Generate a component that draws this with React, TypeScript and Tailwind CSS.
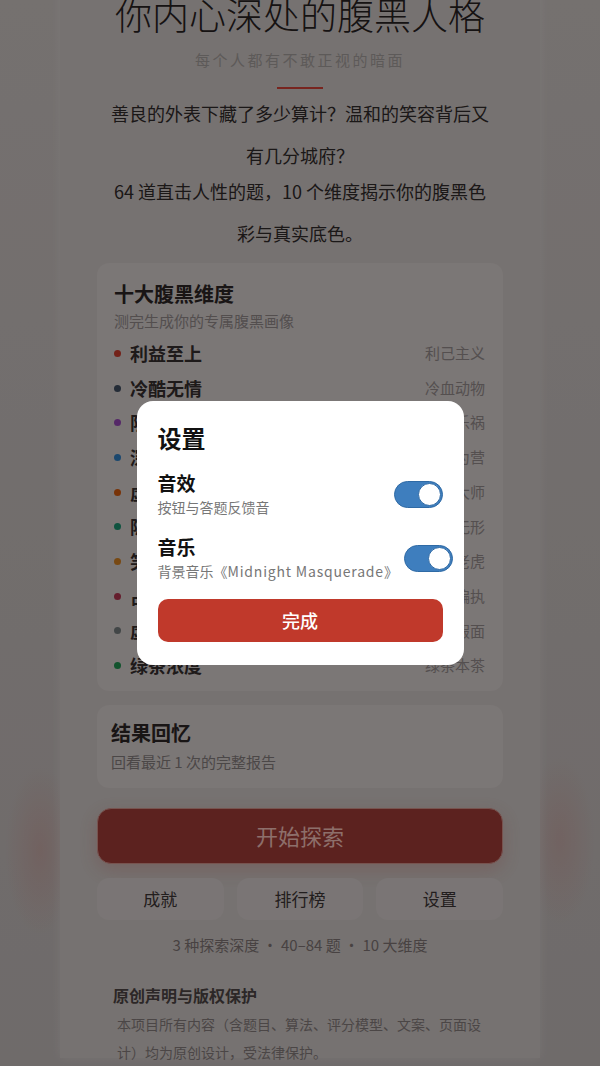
import React, { useState } from 'react';

type Dimension = {
    name: string;
    tag: string;
    dot: string;
};

const dimensions: Dimension[] = [
    { name: '利益至上', tag: '利己主义', dot: 'bg-[#c0392b]' },
    { name: '冷酷无情', tag: '冷血动物', dot: 'bg-[#3d4a5c]' },
    { name: '阴暗心理', tag: '幸灾乐祸', dot: 'bg-[#8e44ad]' },
    { name: '深谋远虑', tag: '步步为营', dot: 'bg-[#2e78b8]' },
    { name: '虚情假意', tag: '表演大师', dot: 'bg-[#c8560e]' },
    { name: '隐形操控', tag: '杀人无形', dot: 'bg-[#1a8a6a]' },
    { name: '笑里藏刀', tag: '笑面老虎', dot: 'bg-[#c87a20]' },
    { name: '占有欲望', tag: '极度偏执', dot: 'bg-[#a8324c]' },
    { name: '虚伪程度', tag: '千层假面', dot: 'bg-[#6f7677]' },
    { name: '绿茶浓度', tag: '绿茶本茶', dot: 'bg-[#1e8a4c]' },
];

const Toggle = ({ on, onChange }: { on: boolean; onChange: () => void }) => (
    <button
        onClick={onChange}
        className={`relative shrink-0 w-[49px] h-[27px] rounded-full border border-[#2f6aa5] transition-colors ${on ? 'bg-[#3e7ebe]' : 'bg-[#d5d5d5]'}`}
    >
        <span
            className={`absolute top-[1px] w-[23px] h-[23px] rounded-full bg-white border border-[#2f6aa5] transition-all ${on ? 'right-[1px]' : 'left-[1px]'}`}
        />
    </button>
);

export default function App() {
    const [sfx, setSfx] = useState(true);
    const [music, setMusic] = useState(true);

    return (
        <div
            className="relative h-[1066px] overflow-hidden bg-[radial-gradient(35px_85px_at_40px_850px,rgba(200,95,85,0.2),transparent),radial-gradient(35px_85px_at_560px_840px,rgba(200,95,85,0.18),transparent),linear-gradient(#c3bcba,#b9b2b1)]"
            style={{ fontFamily: '"Noto Sans CJK SC", "Noto Sans", sans-serif' }}
        >
            <div className="w-[480px] mx-auto h-full bg-[#c5bebc] px-[37px] shadow-[0_0_10px_rgba(255,255,255,0.2)]">
                <h1 className="-mt-[8px] text-center text-[37px] leading-[44px] font-light text-[#262020]">你内心深处的腹黑人格</h1>
                <p className="mt-[13px] text-center text-[15px] leading-[22px] tracking-[2.5px] text-[#9c9694]">每个人都有不敢正视的暗面</p>
                <div className="mx-auto mt-[16px] w-[46px] h-[2px] bg-[#c83f35]" />

                <div className="mx-auto max-w-[390px] mt-[3px] text-center text-[18px] leading-[42px] text-[#2e2828]">
                    <p>善良的外表下藏了多少算计？温和的笑容背后又有几分城府？</p>
                    <p className="-mt-[6px]">64 道直击人性的题，10 个维度揭示你的腹黑色彩与真实底色。</p>
                </div>

                <div className="mt-[9px] rounded-[12px] bg-[#cdc6c5] pt-[17px] pb-[8px] pl-[17px] pr-[18px]">
                    <h3 className="text-[20px] leading-[28px] font-bold text-[#2a2424]">十大腹黑维度</h3>
                    <p className="mt-[2px] text-[15px] leading-[22px] text-[#8a8383]">测完生成你的专属腹黑画像</p>
                    <div className="mt-[4px]">
                        {dimensions.map(d => (
                            <div key={d.name} className="flex items-center h-[34.7px]">
                                <span className={`w-[7px] h-[7px] rounded-full ${d.dot}`} />
                                <span className="ml-[9px] text-[18px] font-bold text-[#332c2c]">{d.name}</span>
                                <span className="ml-auto text-[15px] text-[#8c8484]">{d.tag}</span>
                            </div>
                        ))}
                    </div>
                </div>

                <div className="mt-[14px] rounded-[12px] bg-[#cdc6c5] pt-[14px] pb-[15px] px-[14px]">
                    <h3 className="text-[20px] leading-[28px] font-bold text-[#2a2424]">结果回忆</h3>
                    <p className="mt-[4px] text-[15px] leading-[22px] text-[#7e7777]">回看最近 1 次的完整报告</p>
                </div>

                <button className="mt-[20px] w-full h-[56px] rounded-[14px] bg-[#9a3a35] border border-[#c68a84] text-[22px] text-[#ebb9b2] shadow-[0_6px_18px_rgba(192,57,43,0.2)]">
                    开始探索
                </button>

                <div className="mt-[14px] grid grid-cols-3 gap-[13px]">
                    {['成就', '排行榜', '设置'].map(label => (
                        <button key={label} className="h-[42px] rounded-[12px] bg-[#cbc4c3] text-[17px] text-[#3a3232]">
                            {label}
                        </button>
                    ))}
                </div>

                <p className="mt-[14px] text-center text-[15px] leading-[22px] text-[#786f6f]">3 种探索深度 · 40–84 题 · 10 大维度</p>

                <div className="mt-[27px] px-[16px]">
                    <h4 className="text-[16px] leading-[24px] font-bold text-[#4a4242]">原创声明与版权保护</h4>
                    <p className="mt-[3px] pl-[4px] text-[14px] leading-[28px] text-[#7e7676]">本项目所有内容（含题目、算法、评分模型、文案、页面设计）均为原创设计，受法律保护。</p>
                </div>
            </div>

            <div className="absolute inset-0 bg-black/40 flex items-center justify-center">
                <div className="w-[327px] rounded-[16px] bg-white pt-[21px] pb-[23px] px-[21px]">
                    <h2 className="text-[24px] leading-[32px] font-bold text-[#111]">设置</h2>

                    <div className="mt-[17px] flex items-center justify-between gap-[6px]">
                        <div className="whitespace-nowrap">
                            <div className="text-[19px] leading-[24px] font-bold text-[#111]">音效</div>
                            <div className="mt-[2px] text-[14px] leading-[20px] text-[#777]">按钮与答题反馈音</div>
                        </div>
                        <Toggle on={sfx} onChange={() => setSfx(!sfx)} />
                    </div>

                    <div className="mt-[18px] flex items-center justify-between gap-[6px]">
                        <div className="whitespace-nowrap">
                            <div className="text-[19px] leading-[24px] font-bold text-[#111]">音乐</div>
                            <div className="mt-[2px] text-[14px] leading-[20px] text-[#777]">
                                背景音乐《<span className="tracking-[0.8px]">Midnight Masquerade</span>》
                            </div>
                        </div>
                        <Toggle on={music} onChange={() => setMusic(!music)} />
                    </div>

                    <button className="mt-[18px] w-full h-[43px] rounded-[10px] bg-[#c0392b] text-[18px] font-medium text-white">
                        完成
                    </button>
                </div>
            </div>
        </div>
    );
}
